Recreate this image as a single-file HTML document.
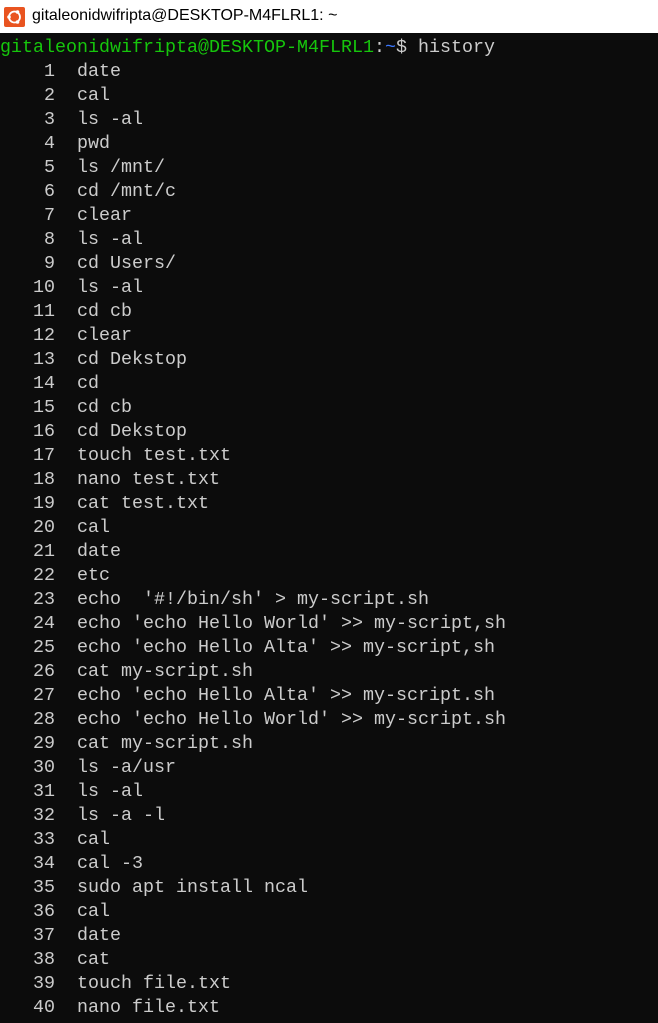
<!DOCTYPE html>
<html><head><meta charset="utf-8"><style>
html,body{margin:0;padding:0;width:658px;height:1023px;overflow:hidden;background:#0c0c0c}
.tb{height:33px;background:#fff;position:relative;font-family:"Liberation Sans",sans-serif;font-size:16px;color:#000}
.tb .ic{position:absolute;left:4px;top:7px;width:21px;height:20px;background:#e95420;border-radius:2px}
.tb .t{position:absolute;left:32px;top:7px}
pre{margin:0;padding:3px 0 0 0;font-family:"Liberation Mono",monospace;font-size:18.33px;line-height:24px;color:#cccccc}
.g{color:#16c60c}.b{color:#3b78ff}
</style></head><body>
<div class="tb"><div class="ic"><svg width="21" height="20" viewBox="0 0 21 20"><circle cx="10.5" cy="10" r="5.5" fill="none" stroke="#fff" stroke-width="1.8"/><circle cx="5" cy="10" r="1.8" fill="#fff"/><circle cx="13.5" cy="5" r="1.8" fill="#fff"/><circle cx="13.5" cy="15" r="1.8" fill="#fff"/></svg></div><div class="t">gitaleonidwifripta@DESKTOP-M4FLRL1: ~</div></div>
<pre><span class="g">gitaleonidwifripta@DESKTOP-M4FLRL1</span>:<span class="b">~</span>$ history
    1  date
    2  cal
    3  ls -al
    4  pwd
    5  ls /mnt/
    6  cd /mnt/c
    7  clear
    8  ls -al
    9  cd Users/
   10  ls -al
   11  cd cb
   12  clear
   13  cd Dekstop
   14  cd
   15  cd cb
   16  cd Dekstop
   17  touch test.txt
   18  nano test.txt
   19  cat test.txt
   20  cal
   21  date
   22  etc
   23  echo  '#!/bin/sh' > my-script.sh
   24  echo 'echo Hello World' >> my-script,sh
   25  echo 'echo Hello Alta' >> my-script,sh
   26  cat my-script.sh
   27  echo 'echo Hello Alta' >> my-script.sh
   28  echo 'echo Hello World' >> my-script.sh
   29  cat my-script.sh
   30  ls -a/usr
   31  ls -al
   32  ls -a -l
   33  cal
   34  cal -3
   35  sudo apt install ncal
   36  cal
   37  date
   38  cat
   39  touch file.txt
   40  nano file.txt</pre>
</body></html>
